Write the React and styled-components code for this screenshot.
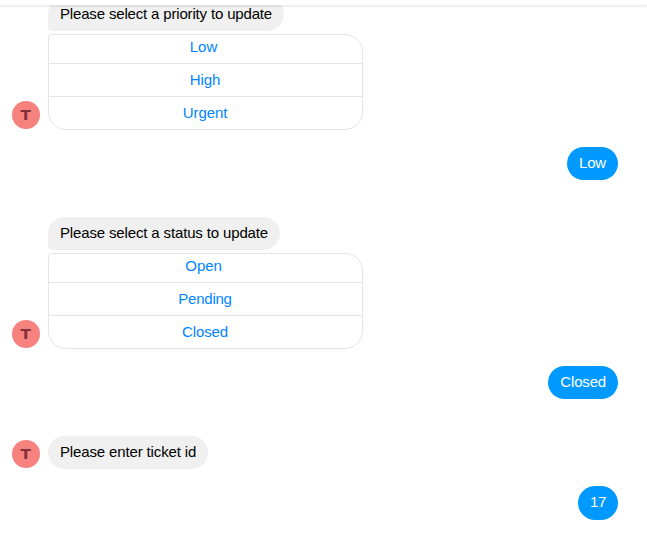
import React from 'react';
import styled, { createGlobalStyle } from 'styled-components';

const GlobalStyle = createGlobalStyle`
  * { box-sizing: border-box; }
  body {
    margin: 0;
    background: #fff;
    font-family: "Liberation Sans", Arial, sans-serif;
    font-size: 15px;
    line-height: 17px;
    overflow: hidden;
  }
`;

const Window = styled.main`
  height: 534px;
  display: flex;
  flex-direction: column;
  overflow: hidden;
  background: #fff;
`;

const Header = styled.header`
  flex: none;
  height: 5px;
  background: #fff;
  box-shadow: 0 1px 2px 1px rgba(0, 0, 0, 0.07);
  z-index: 1;
`;

const Thread = styled.section`
  flex: 1;
  min-height: 0;
  display: flex;
  flex-direction: column;
  justify-content: flex-end;
  padding: 0 29px 14px 12px;
`;

const BotMessage = styled.article`
  flex: none;
  display: flex;
  align-items: flex-end;
  gap: 8px;
  margin-bottom: 17px;
`;

const Avatar = styled.div`
  display: flex;
  align-items: center;
  justify-content: center;
  width: 28px;
  height: 28px;
  margin-bottom: 1px;
  border-radius: 50%;
  background: #f5827d;
  color: #83303c;
  font: bold 14px/28px "DejaVu Sans", sans-serif;
`;

const Initial = styled.span`
  display: block;
  transform: scaleX(1.08);
`;

const Content = styled.div`
  display: flex;
  flex-direction: column;
  align-items: flex-start;
  gap: 3px;
`;

const Bubble = styled.p`
  margin: 0;
  height: 33px;
  padding: 7px 12px 9px;
  border-radius: ${({ $joined }) => ($joined ? '17px 17px 17px 4px' : '17px')};
  background: #f0f0f0;
  color: #000;
  letter-spacing: ${({ $tracking }) => $tracking}px;
  white-space: nowrap;
`;

const Options = styled.div`
  width: 315px;
  height: 96px;
  display: flex;
  flex-direction: column;
  overflow: hidden;
  border: 1px solid #e4e4e4;
  border-radius: 4px 18px 18px 18px;
`;

const Option = styled.button`
  height: 33px;
  padding: 0 1px 2px 0;
  border: 0;
  border-top: 1px solid #e4e4e4;
  background: transparent;
  color: #0084ff;
  font: inherit;
  letter-spacing: ${({ $tracking }) => $tracking}px;
  text-align: center;

  &:first-child {
    height: 28px;
    padding: 0 4px 6px 0;
    border-top: 0;
  }
`;

const Reply = styled.p`
  flex: none;
  align-self: flex-end;
  margin: 0 0 ${({ $last }) => ($last ? 0 : '37px')};
  height: ${({ $last }) => ($last ? '34px' : '33px')};
  padding: 7px 12px 9px;
  border-radius: 17px;
  background: #0099ff;
  color: #fff;
  letter-spacing: ${({ $last }) => ($last ? -0.34 : -0.17)}px;
`;

const conversation = [
  { prompt: 'Please select a priority to update', tracking: -0.165, options: ['Low', 'High', 'Urgent'], reply: 'Low' },
  { prompt: 'Please select a status to update', tracking: -0.145, options: ['Open', 'Pending', 'Closed'], reply: 'Closed' },
  { prompt: 'Please enter ticket id', tracking: -0.14, options: [], reply: '17' },
];

export default function App() {
  return (
    <>
      <GlobalStyle />
      <Window>
        <Header />
        <Thread>
          {conversation.map(({ prompt, tracking, options, reply }, i) => (
            <React.Fragment key={prompt}>
              <BotMessage>
                <Avatar><Initial>T</Initial></Avatar>
                <Content>
                  <Bubble $joined={options.length > 0} $tracking={tracking}>{prompt}</Bubble>
                  {options.length > 0 && (
                    <Options>
                      {options.map((label) => (
                        <Option key={label} $tracking={label === 'Pending' ? -0.25 : -0.08}>{label}</Option>
                      ))}
                    </Options>
                  )}
                </Content>
              </BotMessage>
              <Reply $last={i === conversation.length - 1}>{reply}</Reply>
            </React.Fragment>
          ))}
        </Thread>
      </Window>
    </>
  );
}
